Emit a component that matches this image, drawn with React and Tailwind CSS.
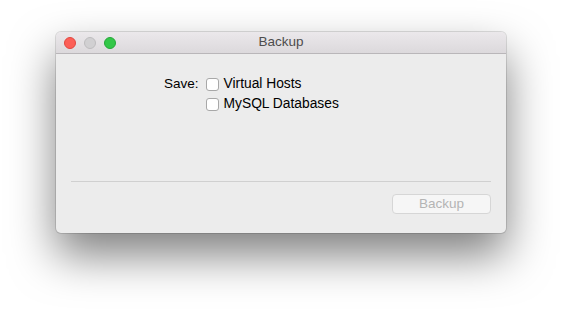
export default function App() {
  return (
    <div className="w-[562px] h-[313px] bg-white pt-[32px] pl-[56px] font-['Liberation_Sans',Arial,sans-serif]">
      <div className="w-[450px] h-[201px] rounded-[5px] bg-[#ececec] shadow-[0_22px_45px_rgba(0,0,0,0.5),0_0_0_1px_rgba(0,0,0,0.12)] flex flex-col overflow-hidden">
        {/* Title bar */}
        <div className="relative h-[22px] bg-gradient-to-b from-[#ebe8eb] to-[#dcd9dc] border-b border-[#b9b6b9] flex items-center">
          <div className="flex items-center gap-[8px] pl-[8px]">
            <span className="w-[12px] h-[12px] rounded-full bg-[#fc5f57] border border-[#e1473f]" />
            <span className="w-[12px] h-[12px] rounded-full bg-[#d1d0d2] border border-[#bdbcbe]" />
            <span className="w-[12px] h-[12px] rounded-full bg-[#33c748] border border-[#25a738]" />
          </div>
          <div className="absolute inset-0 flex items-center justify-center text-[13.5px] text-[#4d4d4d]">
            Backup
          </div>
        </div>
        {/* Body */}
        <div className="flex-1 flex flex-col px-[15px]">
          <div className="flex pt-[21px] pl-[93px] h-[127px]">
            <div className="text-[13.5px] text-black leading-[18px] mr-[7px]">Save:</div>
            <div className="flex flex-col gap-[2px]">
              <label className="flex items-center h-[18px]">
                <span className="w-[13px] h-[13px] rounded-[3px] bg-white border border-[#a8a8a8] mr-[5px]" />
                <span className="text-[13.8px] text-black">Virtual Hosts</span>
              </label>
              <label className="flex items-center h-[18px]">
                <span className="w-[13px] h-[13px] rounded-[3px] bg-white border border-[#a8a8a8] mr-[5px]" />
                <span className="text-[13.8px] text-black">MySQL Databases</span>
              </label>
            </div>
          </div>
          <div className="h-px bg-[#d0d0d0]" />
          <div className="flex justify-end pt-[12px]">
            <button className="w-[99px] h-[20px] rounded-[4px] bg-[#f6f6f6] border border-[#d6d6d6] text-[13.5px] text-[#b4b4b4] leading-none">
              Backup
            </button>
          </div>
        </div>
      </div>
    </div>
  )
}
